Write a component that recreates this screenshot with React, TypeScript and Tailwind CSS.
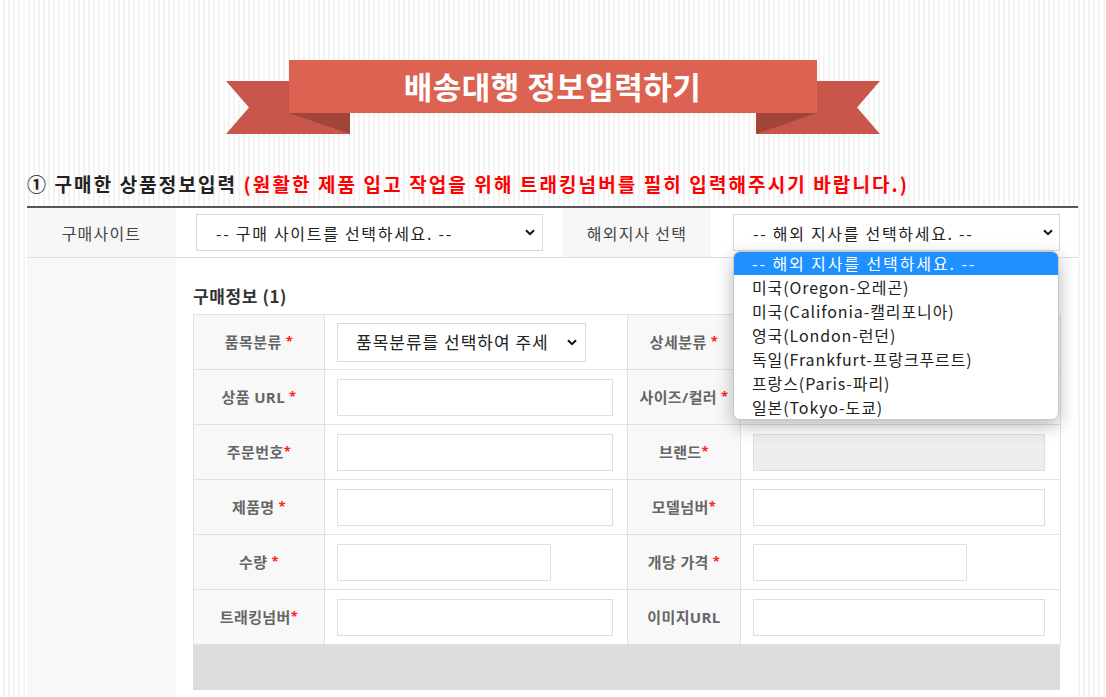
import React from 'react';

const kr = "font-['Noto_Sans_CJK_KR','Noto_Sans',sans-serif]";
const lbl = "font-['Open_Sans','Noto_Sans_CJK_KR',sans-serif]";

function Chevron() {
  return (
    <svg width="10" height="7" viewBox="0 0 10 7" className="shrink-0">
      <path d="M1 1.2 L5 5.2 L9 1.2" fill="none" stroke="#111" strokeWidth="2" />
    </svg>
  );
}

function FakeSelect({ text, className }: { text: string; className: string }) {
  return (
    <div className={`flex items-center border border-[#d9d9d9] bg-white ${className}`}>
      <span className="flex-1 overflow-hidden whitespace-nowrap text-[#222]">{text}</span>
      <Chevron />
    </div>
  );
}

function Ribbon() {
  return (
    <div className="flex justify-center pt-[60px]">
      <div className="relative h-[74px] w-[654px]">
        <svg width="654" height="74" viewBox="0 0 654 74" className="absolute inset-0">
          <polygon points="0,21 124,21 124,74 0,74 23,47.5" fill="#c8564a" />
          <polygon points="530,21 654,21 631,47.5 654,74 530,74" fill="#c8564a" />
          <polygon points="63,53 124,53 124,74" fill="#a1453a" />
          <polygon points="530,53 591,53 530,74" fill="#a1453a" />
          <rect x="63" y="0" width="528" height="53" fill="#dc6352" />
        </svg>
        <div className="absolute left-[63px] top-0 flex h-[53px] w-[528px] items-center justify-center">
          <span className={`${kr} text-[31px] font-bold tracking-[0.5px] text-white`}>배송대행 정보입력하기</span>
        </div>
      </div>
    </div>
  );
}

const Star = () => <span className="ml-[4px] text-[13px] text-[#ff2020]">*</span>;
const StarTight = () => <span className="text-[13px] text-[#ff2020]">*</span>;

type Cell = { label: React.ReactNode; field: React.ReactNode };

function Input({ w, disabled }: { w: string; disabled?: boolean }) {
  return <div className={`h-[37px] border border-[#dedede] ${disabled ? 'bg-[#eeeeee]' : 'bg-white'} ${w}`} />;
}

export default function App() {
  const rows: [Cell, Cell][] = [
    [
      { label: <>품목분류<Star /></>, field: <FakeSelect text="품목분류를 선택하여 주세요" className="h-[39px] w-[249px] gap-[18px] pl-[18px] pr-[8px] text-[17px] tracking-[1px]" /> },
      { label: <>상세분류<Star /></>, field: <FakeSelect text="" className="h-[39px] w-[249px] pl-[18px] pr-[8px] text-[17px]" /> },
    ],
    [
      { label: <>상품 URL<Star /></>, field: <Input w="w-[276px]" /> },
      { label: <>사이즈/컬러<Star /></>, field: <Input w="w-[292px]" /> },
    ],
    [
      { label: <>주문번호<StarTight /></>, field: <Input w="w-[276px]" /> },
      { label: <>브랜드<StarTight /></>, field: <Input w="w-[292px]" disabled /> },
    ],
    [
      { label: <>제품명<Star /></>, field: <Input w="w-[276px]" /> },
      { label: <>모델넘버<StarTight /></>, field: <Input w="w-[292px]" /> },
    ],
    [
      { label: <>수량<Star /></>, field: <Input w="w-[214px]" /> },
      { label: <>개당 가격<Star /></>, field: <Input w="w-[214px]" /> },
    ],
    [
      { label: <>트래킹넘버<StarTight /></>, field: <Input w="w-[276px]" /> },
      { label: <>이미지URL</>, field: <Input w="w-[292px]" /> },
    ],
  ];

  const branches = [
    '미국(Oregon-오레곤)',
    '미국(Califonia-캘리포니아)',
    '영국(London-런던)',
    '독일(Frankfurt-프랑크푸르트)',
    '프랑스(Paris-파리)',
    '일본(Tokyo-도쿄)',
  ];

  return (
    <div className={`${kr} min-h-screen bg-[repeating-linear-gradient(90deg,#ffffff_0px,#ffffff_3px,#f3f3f3_3px,#f3f3f3_5px)]`}>
      <div className="ml-[27px] w-[1051px]">
        <Ribbon />

        {/* section title */}
        <div className="mt-[36px] pb-[9px] text-[19px] font-bold leading-[27px] tracking-[2.1px]">
          <span className="text-[#222]">① 구매한 상품정보입력 </span>
          <span className="text-[#ff0000]">(원활한 제품 입고 작업을 위해 트래킹넘버를 필히 입력해주시기 바랍니다.)</span>
        </div>

        {/* top select row */}
        <div className="grid grid-cols-[149px_387px_148px_367px] border-t-2 border-b border-t-[#555] border-b-[#dddddd] text-[16px] tracking-[1.2px]">
          <div className="flex h-[49px] items-center justify-center bg-[#f7f7f7] text-[#444]">구매사이트</div>
          <div className="flex items-center bg-white px-[20px]">
            <FakeSelect text="-- 구매 사이트를 선택하세요. --" className="h-[37px] w-full pl-[19px] pr-[7px] tracking-[1.7px]" />
          </div>
          <div className="flex items-center justify-center bg-[#f7f7f7] text-[#444]">해외지사 선택</div>
          <div className="relative flex items-center bg-white pl-[22px] pr-[18px]">
            <FakeSelect text="-- 해외 지사를 선택하세요. --" className="h-[37px] w-full pl-[19px] pr-[6px] tracking-[1.7px]" />
            {/* open dropdown */}
            <div className="absolute left-[22px] top-[43px] z-10 w-[326px] overflow-hidden rounded-[7px] border border-[#c8c8c8] bg-white text-[16px] tracking-[0.9px] text-[#222] shadow-[0_6px_18px_rgba(0,0,0,0.28)]">
              <div className="h-[23px] bg-[#1e90ff] pl-[18px] leading-[23px] tracking-[1.9px] text-white">-- 해외 지사를 선택하세요. --</div>
              {branches.map((b) => (
                <div key={b} className="h-[24px] pl-[18px] leading-[24px]">{b}</div>
              ))}
            </div>
          </div>
        </div>

        {/* purchase info block */}
        <div className="grid grid-cols-[149px_902px]">
          <div className="bg-[#f8f8f8]" />
          <div className="bg-white pb-[7px] pl-[17px] pr-[18px]">
            <div className="pt-[26px] text-[17px] font-bold leading-[24px] tracking-[0.6px] text-[#333]">구매정보 (1)</div>
            <div className="mt-[6px] grid grid-cols-[131px_303px_113px_320px] border-l border-t border-[#e2e2e2]">
              {rows.map((r, i) => (
                <React.Fragment key={i}>
                  {r.map((c, j) => (
                    <React.Fragment key={j}>
                      <div className={`${lbl} flex h-[55px] items-center justify-center whitespace-nowrap border-b border-r border-[#e2e2e2] bg-[#f8f8f8] text-[15px] font-bold tracking-[0.4px] text-[#666]`}>
                        {c.label}
                      </div>
                      <div className="flex h-[55px] items-center border-b border-r border-[#e2e2e2] bg-white pl-[12px]">
                        {c.field}
                      </div>
                    </React.Fragment>
                  ))}
                </React.Fragment>
              ))}
            </div>
            <div className="h-[45px] bg-[#dcdcdc]" />
          </div>
        </div>
      </div>
    </div>
  );
}
